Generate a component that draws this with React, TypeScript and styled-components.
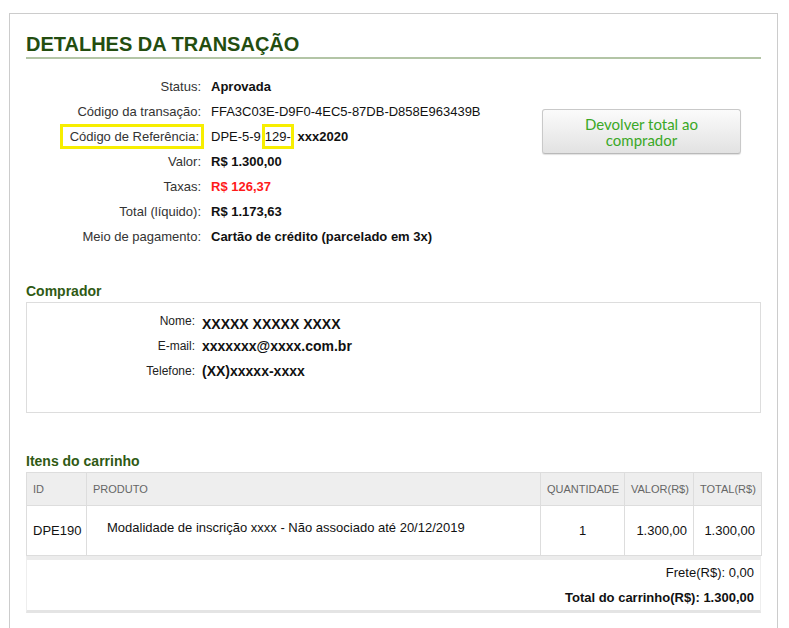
import React from 'react';
import styled, { createGlobalStyle } from 'styled-components';

const GlobalStyle = createGlobalStyle`
  body {
    margin: 0;
    background: #fff;
    font-family: 'Liberation Sans', Arial, sans-serif;
    color: #222;
  }
`;

const Panel = styled.div`
  box-sizing: border-box;
  width: 769px;
  min-height: 640px;
  margin: 13px 0 0 9px;
  padding: 18px 16px 0;
  border: 1px solid #cccccc;
  border-bottom: none;
`;

const Title = styled.h1`
  margin: 0;
  padding-bottom: 1px;
  border-bottom: 2px solid #b3c5a6;
  font-size: 20px;
  line-height: 24px;
  font-weight: bold;
  color: #234d10;
`;

const Summary = styled.div`
  display: flex;
  margin-top: 15px;
`;

const Details = styled.dl`
  flex: 1;
  display: grid;
  grid-template-columns: 175px 1fr;
  column-gap: 10px;
  grid-auto-rows: 25px;
  align-items: center;
  margin: 0;
  font-size: 13px;
`;

const Label = styled.dt`
  text-align: right;
  color: #333;
  white-space: nowrap;
`;

const Value = styled.dd<{ $bold?: boolean; $tone?: 'danger' }>`
  margin: 0;
  white-space: nowrap;
  font-weight: ${(p) => (p.$bold ? 'bold' : 'normal')};
  color: ${(p) => (p.$tone === 'danger' ? '#ff1a1a' : '#111')};
`;

// yellow annotation boxes drawn over the screenshot
const Marked = styled.span<{ $pad?: string; $space?: string }>`
  outline: 3px solid #f7ee00;
  padding: ${(p) => p.$pad || '2px 0'};
  margin: ${(p) => p.$space || '0'};
`;

const Strong = styled.b`
  font-weight: bold;
`;

const Actions = styled.div`
  width: 219px;
  padding-top: 35px;
`;

const RefundButton = styled.button`
  box-sizing: border-box;
  width: 199px;
  height: 45px;
  padding: 0 20px;
  border: 1px solid #c9c9c9;
  border-bottom-color: #b9b9b9;
  border-radius: 3px;
  background: linear-gradient(#fbfbfb, #e2e2e2);
  box-shadow: 0 1px 1px rgba(0, 0, 0, 0.12);
  font-family: Lato, 'Open Sans', sans-serif;
  font-size: 15px;
  line-height: 16px;
  color: #3aa826;
  cursor: pointer;
`;

const SectionTitle = styled.h2<{ $gap: number }>`
  margin: ${(p) => p.$gap}px 0 2px;
  font-size: 14px;
  line-height: 17px;
  font-weight: bold;
  color: #2f5a14;
`;

const BuyerBox = styled.div`
  box-sizing: border-box;
  height: 111px;
  padding-top: 5px;
  border: 1px solid #dddddd;
`;

const BuyerGrid = styled.dl`
  display: grid;
  grid-template-columns: 168px 1fr;
  column-gap: 7px;
  grid-auto-rows: 25px;
  align-items: center;
  margin: 0;
`;

const BuyerLabel = styled.dt`
  text-align: right;
  font-size: 12px;
  color: #222;
`;

const BuyerValue = styled.dd<{ $drop?: boolean }>`
  margin: ${(p) => (p.$drop ? '7px 0 0' : '0')};
  font-size: 14px;
  font-weight: bold;
  color: #111;
`;

const ItemsTable = styled.table`
  width: 100%;
  table-layout: fixed;
  border-collapse: collapse;
  font-size: 13px;
`;

const Row = styled.tr<{ $height: number }>`
  height: ${(p) => p.$height}px;
`;

const HeadCell = styled.th`
  padding: 0 6px;
  border: 1px solid #dddddd;
  background: #eeeeee;
  font-size: 11px;
  font-weight: normal;
  text-align: left;
  color: #666;
  white-space: nowrap;
`;

const Cell = styled.td<{ $align?: 'left' | 'center' | 'right'; $top?: boolean }>`
  padding: ${(p) => (p.$top ? '14px 6px 0 20px' : '0 6px')};
  border: 1px solid #dddddd;
  vertical-align: ${(p) => (p.$top ? 'top' : 'middle')};
  text-align: ${(p) => p.$align || 'left'};
  color: #111;
`;

const Totals = styled.div`
  border: 1px solid #eeeeee;
  border-top: 4px solid #ececec;
  border-bottom: 3px solid #e4e4e4;
  padding: 0 6px;
  text-align: right;
  font-size: 13px;
`;

const TotalLine = styled.div<{ $bold?: boolean }>`
  line-height: 25px;
  font-weight: ${(p) => (p.$bold ? 'bold' : 'normal')};
  color: #111;
`;

export default function App() {
  return (
    <>
      <GlobalStyle />
      <Panel>
        <Title>DETALHES DA TRANSAÇÃO</Title>

        <Summary>
          <Details>
            <Label>Status:</Label>
            <Value $bold>Aprovada</Value>
            <Label>Código da transação:</Label>
            <Value>FFA3C03E-D9F0-4EC5-87DB-D858E963439B</Value>
            <Label>
              <Marked $pad="2px 2px 2px 7px">Código de Referência:</Marked>
            </Label>
            <Value>
              DPE-5-9
              <Marked $space="0 3px 0 4px">129-</Marked> <Strong>xxx2020</Strong>
            </Value>
            <Label>Valor:</Label>
            <Value $bold>R$ 1.300,00</Value>
            <Label>Taxas:</Label>
            <Value $bold $tone="danger">R$ 126,37</Value>
            <Label>Total (líquido):</Label>
            <Value $bold>R$ 1.173,63</Value>
            <Label>Meio de pagamento:</Label>
            <Value $bold>Cartão de crédito (parcelado em 3x)</Value>
          </Details>
          <Actions>
            <RefundButton>Devolver total ao comprador</RefundButton>
          </Actions>
        </Summary>

        <SectionTitle $gap={34}>Comprador</SectionTitle>
        <BuyerBox>
          <BuyerGrid>
            <BuyerLabel>Nome:</BuyerLabel>
            <BuyerValue $drop>XXXXX XXXXX XXXX</BuyerValue>
            <BuyerLabel>E-mail:</BuyerLabel>
            <BuyerValue>xxxxxxx@xxxx.com.br</BuyerValue>
            <BuyerLabel>Telefone:</BuyerLabel>
            <BuyerValue>(XX)xxxxx-xxxx</BuyerValue>
          </BuyerGrid>
        </BuyerBox>

        <SectionTitle $gap={40}>Itens do carrinho</SectionTitle>
        <ItemsTable>
          <colgroup>
            <col style={{ width: 60 }} />
            <col style={{ width: 454 }} />
            <col style={{ width: 84 }} />
            <col style={{ width: 69 }} />
            <col style={{ width: 68 }} />
          </colgroup>
          <thead>
            <Row $height={33}>
              <HeadCell>ID</HeadCell>
              <HeadCell>PRODUTO</HeadCell>
              <HeadCell>QUANTIDADE</HeadCell>
              <HeadCell>VALOR(R$)</HeadCell>
              <HeadCell>TOTAL(R$)</HeadCell>
            </Row>
          </thead>
          <tbody>
            <Row $height={50}>
              <Cell>DPE190</Cell>
              <Cell $top>Modalidade de inscrição xxxx - Não associado até 20/12/2019</Cell>
              <Cell $align="center">1</Cell>
              <Cell $align="right">1.300,00</Cell>
              <Cell $align="right">1.300,00</Cell>
            </Row>
          </tbody>
        </ItemsTable>
        <Totals>
          <TotalLine>Frete(R$): 0,00</TotalLine>
          <TotalLine $bold>Total do carrinho(R$): 1.300,00</TotalLine>
        </Totals>
      </Panel>
    </>
  );
}
